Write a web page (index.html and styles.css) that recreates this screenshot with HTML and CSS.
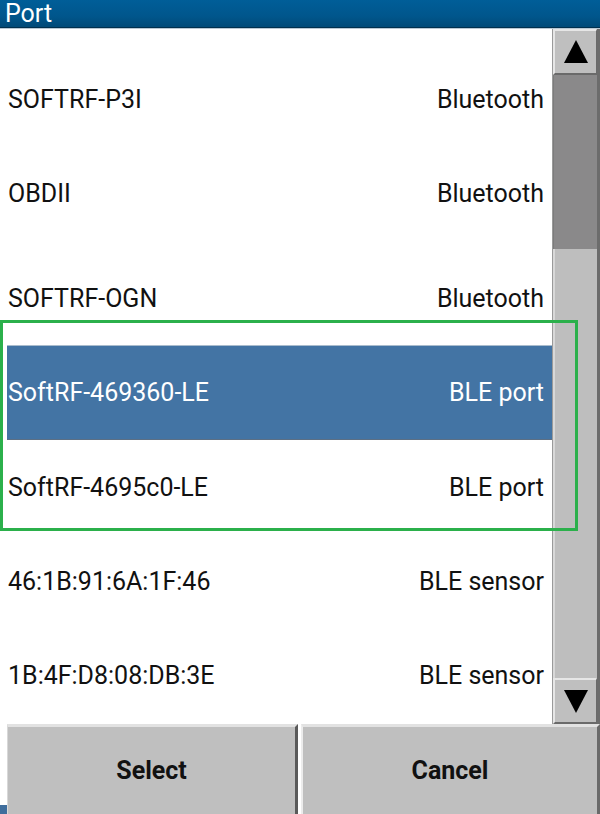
FILE: index.html
```html
<!DOCTYPE html>
<html>
<head>
<meta charset="utf-8">
<link rel="stylesheet" href="styles.css">
</head>
<body>
<div class="dialog">
  <div class="titlebar">Port</div>
  <div class="main">
    <div class="list">
      <div class="row first"><span>SOFTRF-P3I</span><span>Bluetooth</span></div>
      <div class="row"><span>OBDII</span><span>Bluetooth</span></div>
      <div class="row tall"><span>SOFTRF-OGN</span><span>Bluetooth</span></div>
      <div class="row selected"><span>SoftRF-469360-LE</span><span>BLE port</span></div>
      <div class="row"><span>SoftRF-4695c0-LE</span><span>BLE port</span></div>
      <div class="row"><span>46:1B:91:6A:1F:46</span><span>BLE sensor</span></div>
      <div class="row"><span>1B:4F:D8:08:DB:3E</span><span>BLE sensor</span></div>
    </div>
    <div class="scrollbar">
      <div class="sbtn"><svg width="26" height="26" viewBox="0 0 26 26"><polygon points="13,1 25,24 1,24" fill="#000"/></svg></div>
      <div class="thumb"></div>
      <div class="track"></div>
      <div class="sbtn"><svg width="26" height="26" viewBox="0 0 26 26"><polygon points="1,2 25,2 13,25" fill="#000"/></svg></div>
    </div>
  </div>
  <div class="footer">
    <div class="btn select">Select</div>
    <div class="btn cancel">Cancel</div>
  </div>
  <div class="corner"></div>
  <div class="highlight"></div>
</div>
</body>
</html>
```
FILE: styles.css
```css
html, body {
  margin: 0;
  padding: 0;
}
body {
  width: 600px;
  height: 814px;
  overflow: hidden;
  background: #fff;
  font-family: Roboto, "Liberation Sans", sans-serif;
}
.dialog {
  position: relative;
  width: 600px;
  height: 814px;
  display: flex;
  flex-direction: column;
}
.titlebar {
  height: 27px;
  line-height: 28px;
  padding-left: 5px;
  color: #fff;
  font-size: 25px;
  background: linear-gradient(to bottom, #005e98 0%, #00568c 60%, #004a78 100%);
  border-bottom: 1px solid #00304e;
  box-sizing: content-box;
  overflow: hidden;
}
.main {
  height: 695px;
  display: flex;
  border-top: 1px solid #b8c8d4;
}
.list {
  flex: 1;
  padding-left: 7px;
  display: flex;
  flex-direction: column;
  overflow: hidden;
}
.row {
  flex: none;
  height: 94px;
  display: flex;
  align-items: center;
  justify-content: space-between;
  padding: 0 8px 0 1px;
  font-size: 25px;
  color: #111;
  box-sizing: border-box;
}
.row.first {
  height: 117px;
  padding-top: 23px;
}
.row.tall {
  height: 105px;
  padding-top: 11px;
}
.row.selected {
  height: 95px;
  background: #4374a4;
  color: #fff;
  border-top: 1px solid #a9bccd;
  border-bottom: 1px solid #5c6f84;
}
.scrollbar {
  width: 48px;
  display: flex;
  flex-direction: column;
  background: #bebebe;
  border-left: 1px solid #9a9a9a;
  border-right: 3px solid #6c6c6c;
  box-sizing: border-box;
}
.sbtn {
  height: 46px;
  display: flex;
  align-items: center;
  justify-content: center;
  background: #bfbfbf;
  border-top: 2px solid #e6e6e6;
  border-left: 2px solid #e6e6e6;
  border-bottom: 2px solid #6a6a6a;
  border-right: 1px solid #6a6a6a;
  box-sizing: border-box;
}
.thumb {
  height: 174px;
  background: #8a898a;
  border-left: 1px solid #7c7c7c;
}
.track {
  flex: 1;
  background: #bebebe;
  border-left: 2px solid #d8d8d8;
}
.footer {
  flex: 1;
  display: flex;
  padding-left: 7px;
  gap: 3px;
  background: #fff;
}
.btn {
  display: flex;
  align-items: center;
  justify-content: center;
  background: #bfbfbf;
  border-top: 3px solid #e2e2e2;
  font-size: 25px;
  font-weight: bold;
  color: #111;
  box-sizing: border-box;
}
.select {
  width: 291px;
  border-left: 1px solid #d8d8d8;
  border-right: 3px solid #5a5a5a;
}
.cancel {
  flex: 1;
  border-left: 2px solid #ececec;
  border-right: 3px solid #6a6a6a;
}
.corner {
  position: absolute;
  left: 0;
  bottom: 0;
  width: 7px;
  height: 9px;
  background: #3f6d9c;
}
.highlight {
  position: absolute;
  left: 0;
  top: 320px;
  width: 572px;
  height: 205px;
  border: 3px solid #2bb04b;
}
```
